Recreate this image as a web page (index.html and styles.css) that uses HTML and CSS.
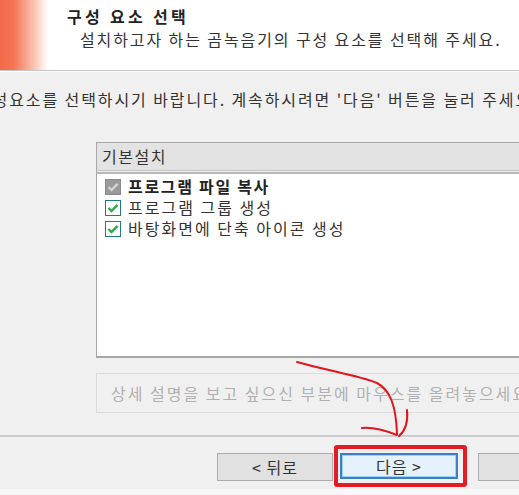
FILE: index.html
```html
<!DOCTYPE html>
<html>
<head>
    <meta charset="UTF-8">
    <title>구성 요소 선택</title>
    <link rel="stylesheet" href="styles.css">
</head>
<body>
    <div class="header">
        <div class="header-mark"></div>
        <div class="header-text">
            <div class="title">구성 요소 선택</div>
            <div class="subtitle">설치하고자 하는 곰녹음기의 구성 요소를 선택해 주세요.</div>
        </div>
    </div>

    <div class="intro">구성요소를 선택하시기 바랍니다. 계속하시려면 '다음' 버튼을 눌러 주세요.</div>

    <div class="panel">
        <div class="panel-head">기본설치</div>
        <div class="panel-list">
            <div class="item item-fixed">
                <svg class="check" width="16" height="16" viewBox="0 0 16 16">
                    <rect x="0.5" y="0.5" width="15" height="15" fill="#9a9a9a" stroke="#8a8a8a"/>
                    <path d="M3.5 8 L6.5 11 L12.5 4.8" fill="none" stroke="#d2d2d2" stroke-width="2.4"/>
                </svg>
                <span>프로그램 파일 복사</span>
            </div>
            <div class="item">
                <svg class="check" width="16" height="16" viewBox="0 0 16 16">
                    <rect x="0.5" y="0.5" width="15" height="15" fill="#fff" stroke="#23788d"/>
                    <path d="M3.5 8 L6.5 11 L12.5 4.8" fill="none" stroke="#2fa84f" stroke-width="2.4"/>
                </svg>
                <span>프로그램 그룹 생성</span>
            </div>
            <div class="item">
                <svg class="check" width="16" height="16" viewBox="0 0 16 16">
                    <rect x="0.5" y="0.5" width="15" height="15" fill="#fff" stroke="#23788d"/>
                    <path d="M3.5 8 L6.5 11 L12.5 4.8" fill="none" stroke="#2fa84f" stroke-width="2.4"/>
                </svg>
                <span>바탕화면에 단축 아이콘 생성</span>
            </div>
        </div>
    </div>

    <div class="desc">상세 설명을 보고 싶으신 부분에 마우스를 올려놓으세요.</div>

    <div class="footer">
        <div class="buttons">
            <div class="btn btn-back">&lt; 뒤로</div>
            <div class="btn btn-next">다음 &gt;<div class="mark-box"></div></div>
            <div class="btn btn-cancel"></div>
        </div>
    </div>
    <div class="bottom-edge"></div>

    <!-- red hand-drawn arrow over the page -->
    <svg class="arrow" width="519" height="495" viewBox="0 0 519 495">
        <path d="M297 362 C325 370 360 376 377 383 C390 390 396 405 397 434" fill="none" stroke="#e3141c" stroke-width="2" stroke-linecap="round"/>
        <path d="M362 428 C372 427 384 430 397 435" fill="none" stroke="#e3141c" stroke-width="2" stroke-linecap="round"/>
        <path d="M407 410 C408 420 406 430 399 436" fill="none" stroke="#e3141c" stroke-width="2" stroke-linecap="round"/>
    </svg>
</body>
</html>
```

FILE: styles.css
```css
body {
    margin: 0;
    background-color: #f0f0f0;
    font-family: "Noto Sans CJK KR", sans-serif;
    font-size: 16px;
    color: #333;
    width: 519px;
    height: 495px;
    overflow: hidden;
    position: relative;
}
.header {
    height: 70px;
    display: flex;
    background: #fff;
    border-bottom: 1px solid #c6c6c6;
    box-shadow: 0 1px 0 #fafafa;
}
.header-mark {
    width: 48px;
    background: linear-gradient(to right, #f26a4a 0%, #f47656 30%, #fbc2b0 70%, #fff 100%);
}
.header-text {
    padding: 6px 0 0 19px;
    white-space: nowrap;
}
.title {
    font-weight: bold;
    line-height: 20px;
    letter-spacing: 3.3px;
    color: #222;
}
.subtitle {
    margin-top: 3px;
    padding-left: 13px;
    line-height: 20px;
    letter-spacing: 1.9px;
}
.intro {
    margin-top: 18px;
    line-height: 20px;
    white-space: nowrap;
    text-indent: -24px;
    letter-spacing: 1.9px;
}
.panel {
    margin: 33px -20px 0 96px;
    border: 1px solid #a8a8a8;
    border-bottom-width: 2px;
    background: #f0f0f0;
}
.panel-head {
    height: 27px;
    line-height: 27px;
    padding-left: 5px;
    background: #e3e3e3;
    border-bottom: 1px solid #c4c4c4;
    margin-bottom: 1px;
    letter-spacing: 1.5px;
}
.panel-list {
    height: 180px;
    padding-top: 2px;
    background: #fff;
    border-top: 2px solid #b8b8b8;
}
.item {
    height: 21px;
    line-height: 21px;
    display: flex;
    align-items: center;
    padding-left: 8px;
    letter-spacing: 2px;
    white-space: nowrap;
}
.item-fixed {
    font-weight: bold;
    letter-spacing: 1.7px;
    color: #222;
}
.check {
    flex: none;
    margin-right: 7px;
}
.desc {
    margin: 15px -20px 0 96px;
    height: 38px;
    line-height: 38px;
    padding-left: 14px;
    border: 1px solid #dcdcdc;
    color: #b0b0b0;
    white-space: nowrap;
    letter-spacing: 2px;
}
.footer {
    margin-top: 22px;
    border-top: 2px solid #cdcdcd;
    height: 52px;
}
.buttons {
    display: flex;
    padding: 16px 0 0 217px;
    white-space: nowrap;
}
.btn {
    height: 26px;
    line-height: 26px;
    text-align: center;
    background: #e1e1e1;
    border: 1px solid #adadad;
    color: #333;
    flex: none;
    position: relative;
    letter-spacing: 1px;
}
.btn-back {
    width: 114px;
}
.btn-next {
    width: 114px;
    margin-left: 7px;
    border: 2px solid #3d7fc6;
    height: 22px;
    line-height: 22px;
    box-shadow: inset 0 0 0 1px #9fd0f5;
    background: #e5f1fb;
}
.btn-cancel {
    width: 118px;
    margin-left: 20px;
}
.mark-box {
    position: absolute;
    left: -8px;
    top: -10px;
    right: -11px;
    bottom: -10px;
    border: 4px solid #e31c23;
    border-radius: 3px;
}
.bottom-edge {
    height: 10px;
    background: #f7f7f7;
}
.arrow {
    position: absolute;
    left: 0;
    top: 0;
    pointer-events: none;
}
```
